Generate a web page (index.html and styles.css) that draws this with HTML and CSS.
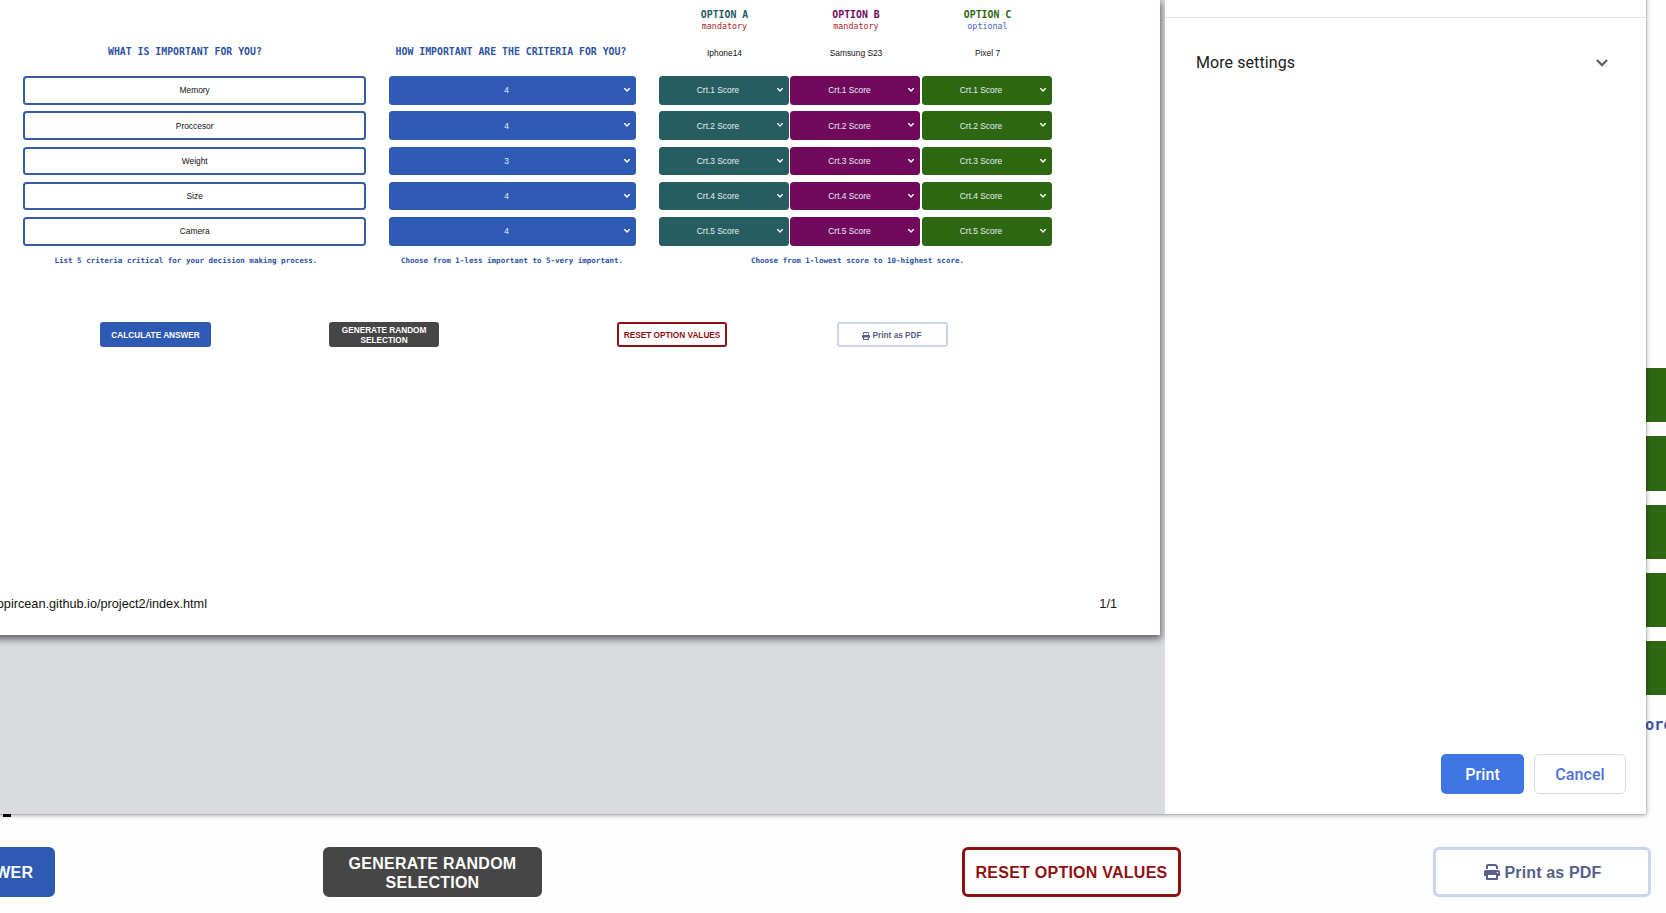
FILE: index.html
```html
<!DOCTYPE html>
<html lang="en">
<head>
<meta charset="utf-8">
<title>Decision maker</title>
<link rel="stylesheet" href="styles.css">
</head>
<body>
<svg class="defs" width="0" height="0">
  <symbol id="chev" viewBox="0 0 6 4"><path d="M.6.6 3 3 5.4.6" fill="none" stroke="currentColor" stroke-width="1.4" stroke-linecap="round" stroke-linejoin="round"/></symbol>
  <symbol id="printer" viewBox="0 0 512 512"><path fill="currentColor" d="M128 0C92.700 0 64 28.700 64 64v96h64V64h226.700L384 93.300V160h64V93.300c0-17-6.700-33.300-18.700-45.300L400 18.700C388 6.700 371.700 0 354.700 0H128zM384 352v96H128v-96h256zm64 32h32c17.700 0 32-14.300 32-32v-96c0-35.300-28.700-64-64-64H64c-35.300 0-64 28.700-64 64v96c0 17.700 14.300 32 32 32h32v96c0 17.700 14.300 32 32 32h320c17.700 0 32-14.300 32-32v-96zM432 248a24 24 0 1 1 0 48 24 24 0 1 1 0-48z"/></symbol>
</svg>

<main class="site">
  <section class="site-scores">
    <div class="bar"></div><div class="bar"></div><div class="bar"></div><div class="bar"></div><div class="bar"></div>
    <p class="site-note">ore.</p>
  </section>
  <div class="caret"></div>
  <section class="site-actions">
    <button class="btn blue">CALCULATE ANSWER</button>
    <button class="btn gray">GENERATE RANDOM SELECTION</button>
    <button class="btn red">RESET OPTION VALUES</button>
    <button class="btn pdf"><svg class="pi"><use href="#printer"/></svg>Print as PDF</button>
  </section>
</main>

<div class="dialog">
  <div class="preview">
    <div class="sheet">
      <div class="columns">
        <div class="col criteria">
          <div class="head"><h2>WHAT IS IMPORTANT FOR YOU?</h2></div>
          <div class="rows">
            <div class="field">Memory</div><div class="field">Proccesor</div><div class="field">Weight</div><div class="field">Size</div><div class="field">Camera</div>
          </div>
          <p class="note">List 5 criteria critical for your decision making process.</p>
        </div>
        <div class="col weights">
          <div class="head"><h2>HOW IMPORTANT ARE THE CRITERIA FOR YOU?</h2></div>
          <div class="rows">
            <div class="field select">4<svg><use href="#chev"/></svg></div>
            <div class="field select">4<svg><use href="#chev"/></svg></div>
            <div class="field select">3<svg><use href="#chev"/></svg></div>
            <div class="field select">4<svg><use href="#chev"/></svg></div>
            <div class="field select">4<svg><use href="#chev"/></svg></div>
          </div>
          <p class="note">Choose from 1-less important to 5-very important.</p>
        </div>
        <div class="col options">
          <div class="trio">
            <div class="opt a">
              <div class="head"><h3>OPTION A</h3><span class="tag">mandatory</span><span class="name">Iphone14</span></div>
              <div class="rows">
                <div class="field select">Crt.1 Score<svg><use href="#chev"/></svg></div>
                <div class="field select">Crt.2 Score<svg><use href="#chev"/></svg></div>
                <div class="field select">Crt.3 Score<svg><use href="#chev"/></svg></div>
                <div class="field select">Crt.4 Score<svg><use href="#chev"/></svg></div>
                <div class="field select">Crt.5 Score<svg><use href="#chev"/></svg></div>
              </div>
            </div>
            <div class="opt b">
              <div class="head"><h3>OPTION B</h3><span class="tag">mandatory</span><span class="name">Samsung S23</span></div>
              <div class="rows">
                <div class="field select">Crt.1 Score<svg><use href="#chev"/></svg></div>
                <div class="field select">Crt.2 Score<svg><use href="#chev"/></svg></div>
                <div class="field select">Crt.3 Score<svg><use href="#chev"/></svg></div>
                <div class="field select">Crt.4 Score<svg><use href="#chev"/></svg></div>
                <div class="field select">Crt.5 Score<svg><use href="#chev"/></svg></div>
              </div>
            </div>
            <div class="opt c">
              <div class="head"><h3>OPTION C</h3><span class="tag">optional</span><span class="name">Pixel 7</span></div>
              <div class="rows">
                <div class="field select">Crt.1 Score<svg><use href="#chev"/></svg></div>
                <div class="field select">Crt.2 Score<svg><use href="#chev"/></svg></div>
                <div class="field select">Crt.3 Score<svg><use href="#chev"/></svg></div>
                <div class="field select">Crt.4 Score<svg><use href="#chev"/></svg></div>
                <div class="field select">Crt.5 Score<svg><use href="#chev"/></svg></div>
              </div>
            </div>
          </div>
          <p class="note">Choose from 1-lowest score to 10-highest score.</p>
        </div>
      </div>
      <div class="sheet-actions">
        <div class="btn small blue">CALCULATE ANSWER</div>
        <div class="btn small gray">GENERATE RANDOM SELECTION</div>
        <div class="btn small red">RESET OPTION VALUES</div>
        <div class="btn small pdf"><svg class="pi"><use href="#printer"/></svg>Print as PDF</div>
      </div>
      <footer class="sheet-foot"><span class="url">opircean.github.io/project2/index.html</span><span>1/1</span></footer>
    </div>
  </div>
  <aside class="panel">
    <div class="more"><span>More settings</span><svg width="12" height="8" viewBox="0 0 12 8"><path d="M.9 1 6 6.100 11.100 1" fill="none" stroke="#5f6368" stroke-width="2.300"/></svg></div>
    <div class="panel-actions"><button class="print">Print</button><button class="cancel">Cancel</button></div>
  </aside>
</div>
</body>
</html>
```
FILE: styles.css
```css
* { box-sizing: border-box; }
body { margin: 0; width: 1666px; height: 913px; overflow: hidden; position: relative; background: #fefefe; font-family: "Liberation Sans", Arial, sans-serif; }
h2, h3, p { margin: 0; }
.defs { display: block; }
button { font-family: inherit; cursor: pointer; }

/* Site behind the dialog */
.site { display: flex; flex-direction: column; height: 913px; }
.site-scores { display: flex; flex-direction: column; gap: 14px; width: 20px; height: 814px; margin-left: 1646px; padding-top: 368px; }
.bar { flex: none; height: 54.250px; background: #2d6712; }
.site-note { width: 60px; margin: 7px 0 0 -1px; font: bold 15.300px/18px "DejaVu Sans Mono", monospace; color: #3a55a5; white-space: nowrap; }
.caret { width: 8px; height: 3px; margin-left: 3px; background: #000; position: relative; z-index: 3; }
.site-actions { position: relative; z-index: 3; display: grid; grid-template-columns: 487px 639px 471px 218px; width: 1815px; margin: 30px 0 0 -164px; }

.btn { display: flex; align-items: center; justify-content: center; width: 219px; height: 50px; padding: 1px 9px 0; border: 3px solid; border-radius: 6px; font-weight: bold; font-size: 16px; line-height: 19px; letter-spacing: .25px; text-align: center; white-space: normal; }
.btn.blue { background: #2f5ab3; border-color: #2f5ab3; color: #fff; }
.btn.gray { background: #464646; border-color: #464646; color: #fff; }
.btn.red { background: #fff; border-color: #8f1013; color: #8f1013; white-space: nowrap; }
.btn.pdf { width: 218px; background: #fff; border-color: #c8d4f0; color: #566089; padding: 0 9px 0 10px; letter-spacing: .15px; }
.pi { width: 16px; height: 16px; margin-right: 5px; }

/* Print dialog */
.dialog { position: absolute; left: -20px; top: -20px; z-index: 2; display: flex; width: 1666px; height: 834px; padding: 20px 0 0 20px; background: #fff; box-shadow: 0 0 1px rgba(0,0,0,.45), 0 1px 5px rgba(0,0,0,.38); }
.preview { width: 1165px; height: 814px; background: #dadbdf; overflow: hidden; }
.sheet { display: flex; flex-direction: column; width: 1180px; height: 635px; margin-left: -20px; padding-left: 20px; background: #fff; box-shadow: 0 3px 7px 1px rgba(30,30,40,.65); }
.columns { display: flex; gap: 23px; padding-left: 23.400px; height: 270px; }
.criteria { width: 342.600px; }
.weights { width: 247px; }
.options { width: 393px; }
.head { display: flex; flex-direction: column; align-items: center; height: 76px; padding-top: 9px; white-space: nowrap; }
.head h2 { margin-top: 36px; font: bold 9.830px/14px "DejaVu Sans Mono", monospace; color: #2c51a5; }
.criteria .head { width: 323px; }
.criteria .note { width: 325px; }
.weights .head { width: 244px; }
.weights .note { width: 246px; }
.head h3 { font: bold 9.830px/12px "DejaVu Sans Mono", monospace; }
.tag { font: 8.400px/10px "DejaVu Sans Mono", monospace; color: #b0262b; }
.name { margin-top: 17px; font-size: 8.400px; line-height: 10px; color: #111; }
.opt .head { padding-left: 1px; }
.rows { display: flex; flex-direction: column; gap: 6.700px; }
.field { display: flex; align-items: center; justify-content: center; height: 28.600px; border: 2px solid #345ca8; border-radius: 3.500px; font-size: 8.400px; line-height: 10px; color: #111; }
.select { border: 0; position: relative; padding-right: 12px; color: #e6edf5; background: #2f5ab3; }
.select svg { position: absolute; right: 6px; top: 12px; width: 6px; height: 4px; color: #fff; }
.trio { display: grid; grid-template-columns: 130px 130px 130px; gap: 1.500px; }
.a h3 { color: #235c60; } .a .select { background: #265d60; }
.b h3 { color: #70095c; } .b .select { background: #70095c; }
.c h3 { color: #2d6712; } .c .select { background: #2d6712; } .c .tag { color: #3f65bd; }
.note { margin-top: 9px; font: bold 7.540px/12px "DejaVu Sans Mono", monospace; color: #2c51a5; text-align: center; white-space: nowrap; }
.options .note { width: 397px; }
.sheet-actions { display: grid; grid-template-columns: 228.500px 288px 220.500px 110px; margin: 52px 0 0 100.400px; }
.small { width: 110.400px; height: 25px; padding: 2px 4px 0; border-width: 2px; border-radius: 3px; font-size: 8.250px; line-height: 10px; letter-spacing: 0; }
.btn.small.pdf { width: 110.400px; padding: 2px 6px 0 4px; letter-spacing: 0; }
.small .pi { width: 8px; height: 8px; margin-right: 3px; }
.sheet-foot { display: flex; justify-content: space-between; width: 1117px; margin-top: 250px; font-size: 12.700px; line-height: 15px; color: #111; }
.url { width: 207px; display: flex; justify-content: flex-end; }
.panel { display: flex; flex-direction: column; justify-content: space-between; width: 481px; height: 814px; background: #fff; font-family: Roboto, sans-serif; }
.more { display: flex; align-items: center; justify-content: space-between; height: 91px; margin-top: 17px; padding: 0 38.500px 1px 31px; border-top: 1px solid #e4e4e6; font-size: 16px; letter-spacing: .08px; color: #202124; }
.panel-actions { display: flex; gap: 10px; justify-content: flex-end; padding: 0 20px 20px 0; }
.print, .cancel { height: 40px; border-radius: 5px; font-size: 16px; font-weight: 500; letter-spacing: .1px; }
.print { width: 83px; border: 0; background: #3f76e4; color: #fff; }
.cancel { width: 92px; border: 1px solid #d8dae0; background: #fff; color: #4f70d8; }
```
